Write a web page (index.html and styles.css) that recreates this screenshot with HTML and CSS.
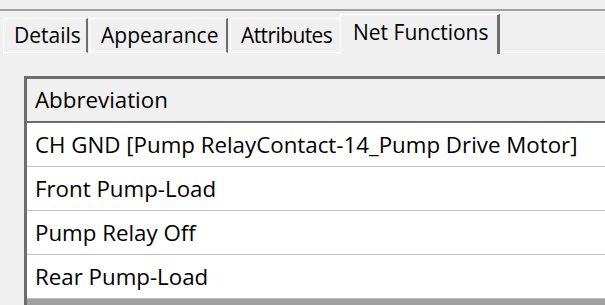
FILE: index.html
```html
<!DOCTYPE html>
<html>
<head>
<meta charset="utf-8">
<link rel="stylesheet" href="styles.css">
</head>
<body>
<div class="frame">
  <div class="topline"></div>
  <div class="tabs">
    <div class="tab tab-details">Details</div>
    <div class="tab tab-appearance">Appearance</div>
    <div class="tab tab-attributes">Attributes</div>
    <div class="tab tab-active">Net Functions</div>
    <div class="tab-fill"></div>
  </div>
  <div class="panel">
    <div class="list">
      <div class="list-header">Abbreviation</div>
      <div class="list-row">CH GND [Pump RelayContact-14_Pump Drive Motor]</div>
      <div class="list-row">Front Pump-Load</div>
      <div class="list-row">Pump Relay Off</div>
      <div class="list-row">Rear Pump-Load</div>
      <div class="list-end"></div>
    </div>
  </div>
</div>
</body>
</html>
```
FILE: styles.css
```css
html, body {
  margin: 0;
  padding: 0;
  background: #f0f0f0;
}
.frame {
  width: 605px;
  height: 305px;
  overflow: hidden;
  font-family: "Open Sans", "Noto Sans", sans-serif;
  font-size: 21px;
  color: #000;
  background: #f0f0f0;
}
.topline {
  height: 9px;
  border-bottom: 2px solid #a0a0a0;
}
.tabs {
  display: flex;
  align-items: flex-end;
  height: 42px;
  padding-left: 3px;
}
.tab {
  box-sizing: border-box;
  height: 35px;
  border-top: 1px solid #ffffff;
  border-left: 1px solid #ffffff;
  border-right: 2px solid #6d6d6d;
  border-bottom: 1px solid #ffffff;
  padding-left: 10px;
  line-height: 32px;
  white-space: nowrap;
  margin-right: 2px;
}
.tab-details { width: 85px; }
.tab-appearance { width: 138px; }
.tab-attributes { width: 112px; margin-right: 0; letter-spacing: -0.6px; }
.tab-active {
  width: 160px;
  height: 40px;
  margin-left: -2px;
  border-bottom: none;
  padding-left: 12px;
  line-height: 34px;
  background: #f0f0f0;
  border-right: 3px solid #6d6d6d;
  margin-bottom: -1px;
}
.tab-fill {
  flex: 1;
  border-bottom: 1px solid #ffffff;
  align-self: stretch;
}
.panel {
  padding: 23px 0 0 24px;
}
.list {
  border-left: 3px solid #6d6d6d;
  border-top: 3px solid #6d6d6d;
  background: #ffffff;
  font-size: 22.3px;
}
.list-header {
  height: 42px;
  line-height: 42px;
  padding-left: 8px;
  background: #f0f0f0;
  border-bottom: 2px solid #6d6d6d;
  white-space: nowrap;
}
.list-row {
  height: 43px;
  line-height: 43px;
  padding-left: 8px;
  border-bottom: 1px solid #c0c0c0;
  white-space: nowrap;
}
.list-end {
  height: 12px;
  background: #a0a0a0;
}
```
